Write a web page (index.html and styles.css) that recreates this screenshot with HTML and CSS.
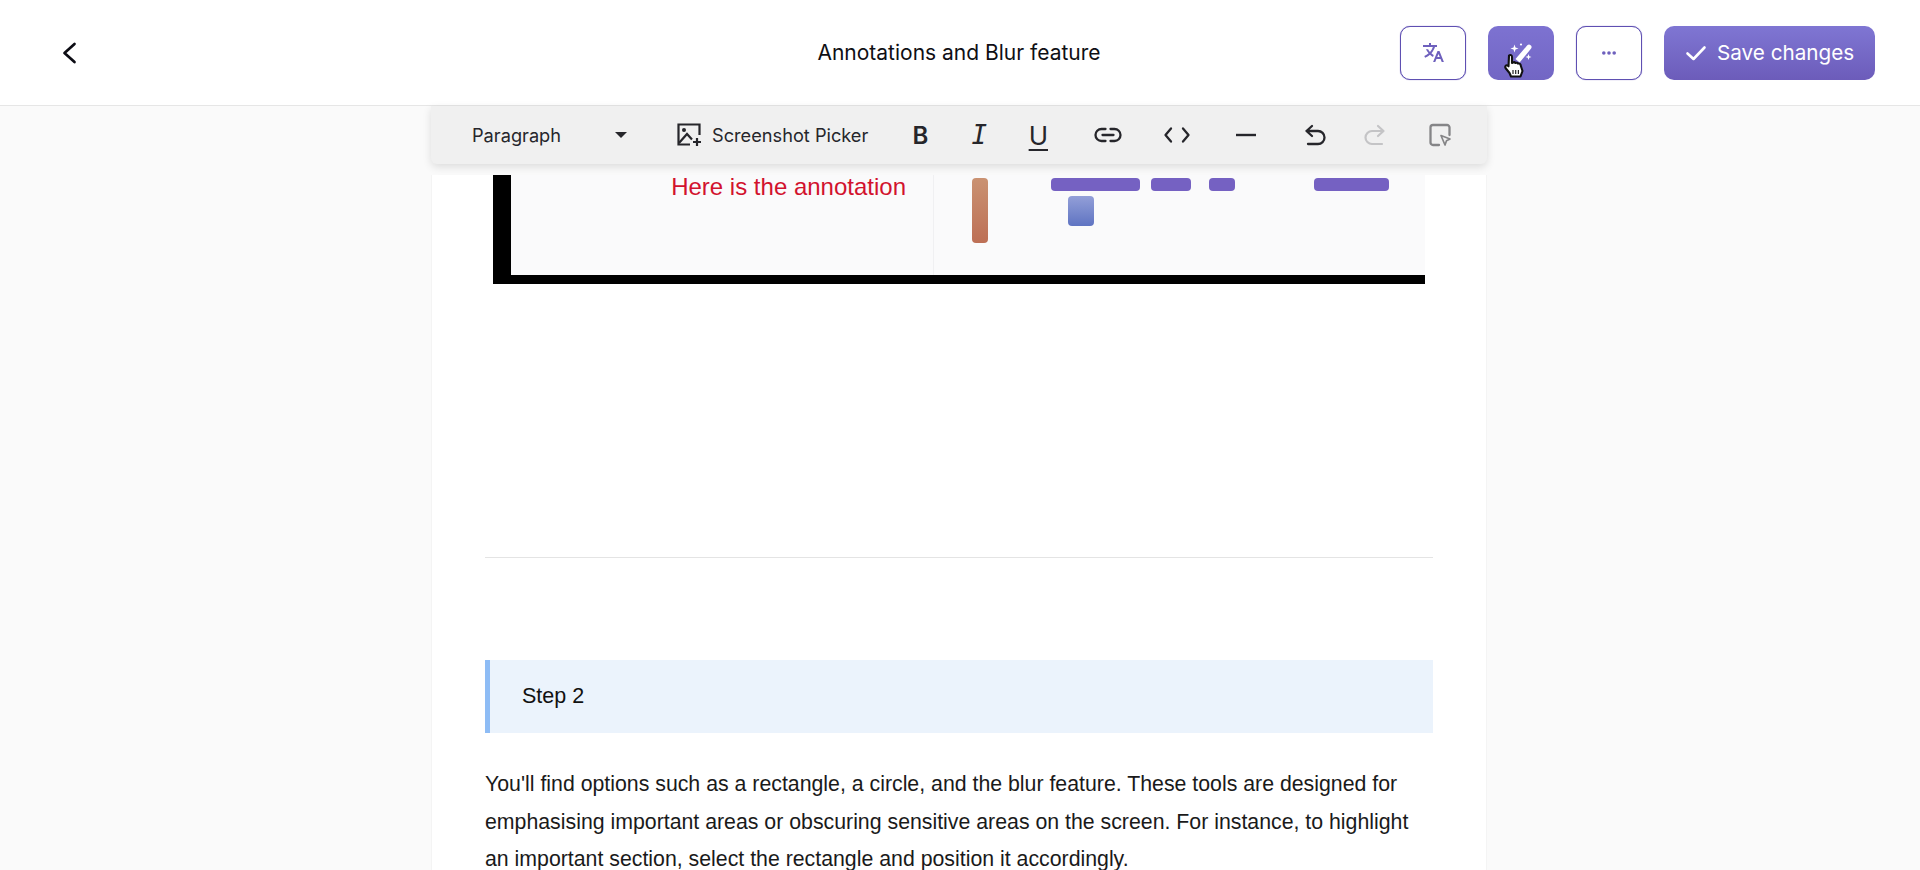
FILE: index.html
```html
<!DOCTYPE html>
<html lang="en">
<head>
<meta charset="utf-8">
<title>Annotations and Blur feature</title>
<link rel="stylesheet" href="styles.css">
</head>
<body>
<header class="topbar">
  <button class="back" aria-label="Back">
    <svg width="24" height="24" viewBox="0 0 24 24" fill="none" stroke="#0c0c14" stroke-width="2.700" stroke-linecap="round" stroke-linejoin="round"><path d="M16.500 3 6.500 12l10 9"/></svg>
  </button>
  <h1 class="title">Annotations and Blur feature</h1>
  <div class="actions">
    <button class="btn-outline" aria-label="Translate">
      <svg width="24" height="24" viewBox="0 0 24 24" fill="#6e60bd"><path d="M18.500 10 22.900 21H20.745L19.544 18H15.454L14.255 21H12.100L16.500 10H18.500ZM17.500 12.900 16.250 16H18.750L17.500 12.900ZM10 2V4H16V6H14C13.200 8.400 12 10.500 10.400 12.300 11.100 12.950 11.900 13.500 12.750 14L12 15.900C10.900 15.300 9.900 14.550 9 13.700 7.600 15 5.900 16 4.100 16.800L3.300 15C4.900 14.350 6.350 13.450 7.600 12.300 6.500 11.100 5.600 9.800 4.900 8.300H7.100C7.650 9.300 8.250 10.200 9 11 10.250 9.600 11.200 7.900 11.850 6H2V4H8V2H10Z"/></svg>
    </button>
    <div class="wand-wrap">
      <button class="btn-solid" aria-label="AI rewrite">
        <svg width="28" height="28" viewBox="0 0 28 28" fill="#fff"><path d="M8.500 20 20.300 6.300a2.500 2.500 0 0 1 3.800 3.200L12.600 23.500Z"/><path d="M7.500 5.500 8.500 8.500 11.500 9.500 8.500 10.500 7.500 13.500 6.500 10.500 3.500 9.500 6.500 8.500Z"/><path d="M21.500 15 22.300 17.200 24.500 18 22.300 18.800 21.500 21 20.700 18.800 18.500 18 20.700 17.200Z"/><circle cx="14" cy="5.500" r="1.100"/></svg>
      </button>
      <svg class="hand" width="22" height="26" viewBox="0 0 22 26"><path d="M6 2.500c1.300-1 3-.4 3 1.500v6l1-.5c1-.5 2 0 2.300.5 1-.6 2.300-.3 2.700.6 1-.4 2.300 0 2.500 1.200L19.500 18l-2 5.500H8L6.500 20 2.500 15c-1-1.500.5-3.300 2-2.500l1 .8Z" fill="#fff" stroke="#111" stroke-width="2.100" stroke-linejoin="round"/><path d="M10 17v4M12.700 17v4M15.400 17v4" stroke="#222" stroke-width="1.200"/></svg>
    </div>
    <button class="btn-outline" aria-label="More">
      <svg width="24" height="24" viewBox="0 0 24 24" fill="#6e60bd"><circle cx="6.800" cy="12" r="1.800"/><circle cx="12" cy="12" r="1.800"/><circle cx="17.200" cy="12" r="1.800"/></svg>
    </button>
    <button class="btn-save">
      <svg width="24" height="24" viewBox="0 0 24 24" fill="none" stroke="#fff" stroke-width="2.600" stroke-linecap="round" stroke-linejoin="round"><path d="M3.500 12.500 9.500 18 20.500 6.500"/></svg>
      <span>Save changes</span>
    </button>
  </div>
</header>

<main class="workspace">
  <div class="toolbar">
    <div class="select"><span>Paragraph</span><i class="caret"></i></div>
    <div class="picker">
      <svg width="26" height="26" viewBox="0 0 26 26" fill="none" stroke="#26262b" stroke-width="2.200"><path d="M14 2.500H2.500v20H14M23.500 13V2.500H14"/><circle cx="8" cy="8" r="2" fill="#26262b" stroke="none"/><path d="M3 21l8-9 5 5.500"/><path d="M21 16v8M17 20h8" stroke-width="2.200"/></svg>
      <span>Screenshot Picker</span>
    </div>
    <div class="tools marks">
      <span class="tool mark-b">B</span>
      <span class="tool mark-i">I</span>
      <span class="tool mark-u">U</span>
    </div>
    <div class="tools inserts">
      <span class="tool"><svg width="28" height="24" viewBox="0 0 28 24" fill="none" stroke="#26262b" stroke-width="2.300" stroke-linecap="round"><path d="M11.500 6H7.500a6 6 0 0 0 0 12h4M16.500 6h4a6 6 0 0 1 0 12h-4M8.500 12h11"/></svg></span>
      <span class="tool"><svg width="28" height="24" viewBox="0 0 28 24" fill="none" stroke="#26262b" stroke-width="2.300" stroke-linecap="round" stroke-linejoin="round"><path d="M8 5.500 2.500 12 8 18.500M20 5.500 25.500 12 20 18.500"/></svg></span>
      <span class="tool"><svg width="24" height="24" viewBox="0 0 24 24" stroke="#26262b" stroke-width="2.400"><path d="M2 12h20"/></svg></span>
      <span class="tool"><svg width="24" height="24" viewBox="0 0 24 24" fill="none" stroke="#26262b" stroke-width="2.300" stroke-linecap="round" stroke-linejoin="round"><path d="M9 3 3.500 8 9 13M3.500 8H15a6 6 0 0 1 0 13H5"/></svg></span>
    </div>
    <div class="tools history">
      <span class="tool"><svg width="24" height="24" viewBox="0 0 24 24" fill="none" stroke="#c4c4c6" stroke-width="2.200" stroke-linecap="round" stroke-linejoin="round"><path d="M15 3 20.500 8 15 13M20.500 8H9a6 6 0 0 0 0 13h10"/></svg></span>
      <span class="tool tool-select"><svg width="24" height="24" viewBox="0 0 24 24" fill="none" stroke="#858587" stroke-width="2.300" stroke-linecap="round" stroke-linejoin="round"><path d="M11 22H5a2.500 2.500 0 0 1-2.500-2.500V4.500A2.500 2.500 0 0 1 5 2h14a2.500 2.500 0 0 1 2.500 2.500V12"/><path d="M13 12.500l9 3.500-3.500 1.800L17 22Z" stroke-width="1.700"/></svg></span>
    </div>
  </div>

  <article class="page">
    <div class="shot">
      <div class="shot-left"><span class="annotation">Here is the annotation</span></div>
      <div class="shot-right">
        <div class="bar-tall"></div>
        <div class="shot-rows">
          <div class="shot-bars">
            <div class="bar bar-a"></div>
            <div class="bar bar-b"></div>
            <div class="bar bar-c"></div>
            <div class="bar bar-d"></div>
          </div>
          <div class="square"></div>
        </div>
      </div>
    </div>
    <div class="body-text">
      <hr class="rule">
      <div class="callout">Step 2</div>
      <p class="para">You'll find options such as a rectangle, a circle, and the blur feature. These tools are designed for emphasising important areas or obscuring sensitive areas on the screen. For instance, to highlight an important section, select the rectangle and position it accordingly.</p>
    </div>
  </article>
</main>
</body>
</html>
```
FILE: styles.css
```css
* { box-sizing: border-box; }
html, body { margin: 0; height: 870px; overflow: hidden; }
body { background: #fafafa; font-family: Inter, "Liberation Sans", sans-serif; color: #111; display: flex; flex-direction: column; }
button { border: 0; padding: 0; background: none; font: inherit; cursor: pointer; }

.topbar { height: 106px; flex: none; background: #fff; border-bottom: 1px solid #e6e6e6; position: relative; display: flex; align-items: center; padding: 0 45px 0 58px; justify-content: space-between; }
.back { width: 24px; height: 24px; display: flex; }
.title { position: absolute; left: 0; right: 2px; margin: 0; text-align: center; font-size: 21px; font-weight: 400; color: #0f0f14; }
.actions { display: flex; align-items: center; gap: 22px; position: relative; }
.btn-outline, .btn-solid { width: 66px; height: 54px; border-radius: 10px; display: flex; align-items: center; justify-content: center; }
.btn-outline { border: 1px solid #5f50b2; box-shadow: 0 0 1px #6e60bd; background: #fff; }
.btn-solid { background: linear-gradient(#7d72d1, #7266c4); }
.wand-wrap { position: relative; display: flex; }
.hand { position: absolute; left: 15px; top: 27px; }
.btn-save { width: 211px; height: 54px; border-radius: 10px; background: linear-gradient(#7f76d3, #6c5cba); color: #fff; font-size: 20.700px; display: flex; align-items: center; gap: 9px; padding-left: 20px; }

.workspace { flex: 1; display: flex; flex-direction: column; align-items: center; min-height: 0; padding-right: 2px; }
.toolbar { width: 1056px; height: 58px; flex: none; background: #f0f0f0; border-radius: 0 0 6px 6px; box-shadow: 0 3px 8px rgba(0,0,0,.12); display: flex; align-items: center; padding-left: 41px; font-size: 18.200px; color: #26262b; position: relative; z-index: 1; }
.select { width: 155px; display: flex; align-items: center; justify-content: space-between; }
.caret { width: 0; height: 0; border-left: 6px solid transparent; border-right: 6px solid transparent; border-top: 6px solid #26262b; }
.picker { margin-left: 49px; display: flex; align-items: center; gap: 10px; }
.tools { display: flex; }
.tool { width: 28px; height: 28px; display: flex; align-items: center; justify-content: center; color: #26262b; }
.marks { gap: 31px; margin-left: 38px; }
.inserts { gap: 41px; margin-left: 42px; }
.history { gap: 0; margin-left: 32px; }
.tool-select { margin-left: 37px; }
.mark-b { font-weight: 600; font-size: 24px; }
.mark-i { font-family: "DejaVu Sans Mono", monospace; font-style: italic; font-size: 26px; }
.mark-u { font-size: 26px; text-decoration: underline; text-decoration-thickness: 2px; text-underline-offset: 4px; }

.page { width: 1056px; flex: 1; min-height: 0; margin-top: 11px; background: #fff; border-left: 1px solid #f4f4f4; border-right: 1px solid #f4f4f4; font-family: "Liberation Sans", Arial, sans-serif; }
.shot { margin-left: 61px; width: 932px; height: 109px; background: #fafafb; border-left: 18px solid #000; border-bottom: 9px solid #000; display: flex; }
.shot-left { width: 422px; flex: none; text-align: right; padding-right: 27px; }
.annotation { color: #d2122e; font-size: 24px; line-height: 24px; display: block; }
.shot-right { flex: 1; border-left: 1px solid #f0f0f2; display: flex; align-items: flex-start; padding: 3px 0 0 38px; }
.bar-tall { width: 16px; height: 65px; border-radius: 4px; background: linear-gradient(#ca9272, #bd6f55); flex: none; }
.shot-rows { margin-left: 63px; }
.shot-bars { display: flex; }
.bar { height: 13px; border-radius: 4px; background: #7561c2; }
.bar-a { width: 89px; }
.bar-b { width: 40px; margin-left: 11px; }
.bar-c { width: 26px; margin-left: 18px; }
.bar-d { width: 75px; margin-left: 79px; }
.square { width: 26px; height: 30px; margin: 5px 0 0 17px; border-radius: 4px; background: linear-gradient(#939fd8, #5f74c2); }

.body-text { padding: 0 53px; }
.rule { border: 0; border-top: 1px solid #e4e4e4; margin: 273px 0 0; }
.callout { margin-top: 102px; height: 73px; background: #ebf3fc; border-left: 5px solid #8ebcf5; padding-left: 32px; display: flex; align-items: center; font-size: 21.500px; color: #111; }
.para { margin: 33px 0 0; font-size: 21.300px; line-height: 37.500px; color: #1a1a1a; }
```
